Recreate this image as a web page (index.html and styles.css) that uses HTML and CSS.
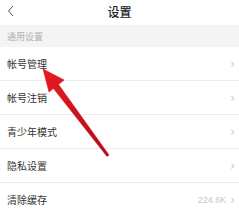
FILE: index.html
```html
<!DOCTYPE html>
<html lang="zh">
<head>
<meta charset="utf-8">
<link rel="stylesheet" href="styles.css">
</head>
<body>
<div class="screen">
  <header class="topbar">
    <svg class="back" width="8" height="12" viewBox="0 0 8 12"><path d="M6 1 L1.5 6 L6 11" fill="none" stroke="#555" stroke-width="1"/></svg>
    <span class="title">设置</span>
  </header>
  <div class="section">通用设置</div>
  <ul class="list">
    <li class="row"><span class="label">帐号管理</span><span class="chev">›</span></li>
    <li class="row"><span class="label">帐号注销</span><span class="chev">›</span></li>
    <li class="row"><span class="label">青少年模式</span><span class="chev">›</span></li>
    <li class="row"><span class="label">隐私设置</span><span class="chev">›</span></li>
    <li class="row"><span class="label">清除缓存</span><span class="value">224.6K</span><span class="chev">›</span></li>
  </ul>
  <svg class="arrow" width="239" height="211" viewBox="0 0 239 211">
    <defs>
      <linearGradient id="g" x1="0" y1="0" x2="1" y2="1">
        <stop offset="0" stop-color="#ec1a20"/>
        <stop offset="1" stop-color="#a80f1a"/>
      </linearGradient>
    </defs>
    <path d="M43 69 L64 80 L58.5 84.5 L109 155 L107 156.5 L53.5 88.5 L49 92 Z" fill="url(#g)" stroke="#d8121a" stroke-width="0.6" stroke-linejoin="round"/>
  </svg>
</div>
</body>
</html>
```
FILE: styles.css
```css
html, body {
  margin: 0;
  padding: 0;
  background: #fff;
}
.screen {
  position: relative;
  width: 239px;
  height: 211px;
  overflow: hidden;
  font-family: "Noto Sans CJK SC", "Noto Sans", sans-serif;
}
.topbar {
  position: relative;
  height: 25px;
  display: flex;
  align-items: center;
  justify-content: center;
}
.back {
  position: absolute;
  left: 7px;
  top: 5px;
}
.title {
  font-size: 12px;
  color: #222;
  font-weight: 500;
  margin-top: -2px;
}
.section {
  height: 22px;
  background: #f4f4f4;
  display: flex;
  align-items: center;
  padding-left: 7px;
  font-size: 9px;
  color: #b0b0b0;
}
.list {
  list-style: none;
  margin: 0;
  padding: 0;
}
.row {
  height: 33px;
  display: flex;
  align-items: center;
  padding: 0 4px 0 7px;
  border-bottom: 1px solid #eeeeee;
  font-size: 10px;
  color: #333;
}
.row:first-child {
  height: 33px;
}
.label {
  flex: 1;
}
.value {
  font-family: "Liberation Sans", Arial, sans-serif;
  font-size: 9px;
  color: #c8c8c8;
  margin-right: 4px;
}
.chev {
  font-family: "DejaVu Sans", sans-serif;
  font-size: 12px;
  color: #c8c8c8;
}
.arrow {
  position: absolute;
  left: 0;
  top: 0;
  pointer-events: none;
}
```
